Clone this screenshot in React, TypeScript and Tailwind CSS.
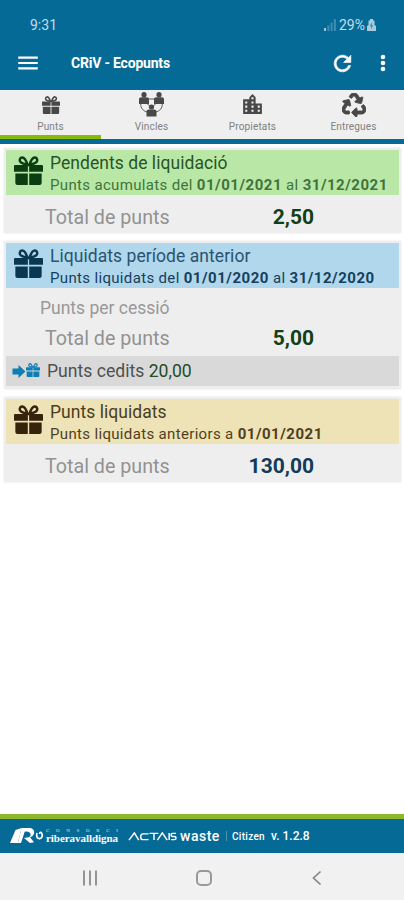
import React from 'react';
import clsx from 'clsx';
import { FaRecycle } from 'react-icons/fa';
import { MdLocationCity, MdMenu } from 'react-icons/md';

interface IconProps {
  className?: string;
}

const GiftIcon: React.FC<IconProps> = ({ className }) => (
  <svg viewBox="0 0 28 28" className={className} fill="currentColor">
    <path
      d="M13 8.300C11.600 4 10 1.200 7.800 1.400 5.400 1.600 4.800 4.800 6.800 6.300 8.300 7.400 10.500 7.800 13 8.300ZM15 8.300C16.400 4 18 1.200 20.200 1.400 22.600 1.600 23.200 4.800 21.200 6.300 19.700 7.400 17.500 7.800 15 8.300Z"
      fill="none"
      stroke="currentColor"
      strokeWidth="2.4"
    />
    <path d="M1 8.700h12.400v6.500H0V9.700a1 1 0 0 1 1-1ZM14.600 8.700H27a1 1 0 0 1 1 1v5.500H14.600Z" />
    <path d="M1.300 16.800h12V28H3.300a2 2 0 0 1-2-2ZM14.700 16.800h12V26a2 2 0 0 1-2 2h-10Z" />
  </svg>
);

const LinksIcon: React.FC<IconProps> = ({ className }) => (
  <svg viewBox="0 0 25 25" className={className} fill="currentColor">
    <path
      d="M9.500 7h6M1.700 12c0 4.200 2.400 7 6.500 8M23.300 12c0 4.200-2.400 7-6.500 8M8 11.500l3 2.800M17 11.500l-3 2.800"
      fill="none"
      stroke="currentColor"
      strokeWidth="0.9"
    />
    <circle cx="5" cy="2.700" r="2.600" />
    <path d="M0 12V7.600C0 6 .8 5.200 2.500 5.200h5C9.200 5.200 10 6 10 7.600V12Z" />
    <circle cx="20" cy="2.700" r="2.600" />
    <path d="M15 12V7.600c0-1.600.8-2.400 2.500-2.400h5c1.700 0 2.500.8 2.500 2.400V12Z" />
    <circle cx="12.500" cy="15" r="2.600" />
    <path d="M7.500 24.500v-4.600c0-1.600.8-2.400 2.500-2.400h5c1.700 0 2.500.8 2.500 2.400v4.600Z" />
  </svg>
);

const RefreshIcon: React.FC<IconProps> = ({ className }) => (
  <svg viewBox="0 0 24 24" className={className} fill="currentColor">
    <path
      d="M17.650 6.350C16.200 4.900 14.210 4 12 4c-4.420 0-7.990 3.580-7.990 8s3.570 8 7.990 8c3.730 0 6.840-2.550 7.730-6h-2.080c-.82 2.330-3.040 4-5.650 4-3.310 0-6-2.690-6-6s2.690-6 6-6c1.660 0 3.140.69 4.220 1.780L13 11h7V4l-2.350 2.350z"
      stroke="currentColor"
      strokeWidth="0.6"
    />
  </svg>
);

const MoreIcon: React.FC<IconProps> = ({ className }) => (
  <svg viewBox="0 0 24 24" className={className} fill="currentColor">
    <circle cx="12" cy="6" r="2.300" />
    <circle cx="12" cy="12" r="2.300" />
    <circle cx="12" cy="18" r="2.300" />
  </svg>
);

const tabs = [
  { label: 'Punts', icon: <GiftIcon className="h-[18px] w-[18px]" /> },
  { label: 'Vincles', icon: <LinksIcon className="h-[25px] w-[25px]" /> },
  { label: 'Propietats', icon: <MdLocationCity className="h-[25px] w-[25px]" /> },
  { label: 'Entregues', icon: <FaRecycle className="h-[24px] w-[24px] stroke-current stroke-[20]" /> },
];

const StatusBar: React.FC = () => (
  <div className="flex h-[50px] items-center justify-between pl-[30px] pr-[28px] text-[14px] text-[#c3dde9]">
    <span>9:31</span>
    <div className="flex items-center">
      <svg viewBox="0 0 12 12" className="mr-[3px] h-[12px] w-[12px]" fill="currentColor">
        <path d="M0 9h2v3H0z" opacity="0.8" />
        <path d="M3.300 6.500h2V12h-2zM6.600 3.500h2V12h-2zM9.900 0h2v12h-2z" opacity="0.3" />
      </svg>
      <span>29%</span>
      <svg viewBox="0 0 9 12" className="ml-[2px] h-[12px] w-[9px]" fill="currentColor">
        <path d="M3 0h3v1.500h1.500V6L9 7v5H0V7l1.500-1V1.500H3Z" opacity="0.85" />
        <path d="M4.900 3 2.800 7.300h1.500L3.900 10.500l2.300-4.300H4.700Z" fill="#066a97" opacity="0.7" />
      </svg>
    </div>
  </div>
);

interface PointsCardProps {
  title: string;
  subtitle: React.ReactNode;
  headClass: string;
  iconClass: string;
  titleClass: string;
  children: React.ReactNode;
}

const PointsCard: React.FC<PointsCardProps> = ({
  title,
  subtitle,
  headClass,
  iconClass,
  titleClass,
  children,
}) => (
  <section className="bg-[#eeeeee] px-[2px] pt-[2px] shadow-[0_0_2px_#e4e4e4]">
    <div className={clsx('flex h-[45px] pl-[8px] pt-[6px]', headClass)}>
      <GiftIcon className={clsx('h-[29px] w-[29px] shrink-0', iconClass)} />
      <div className="-mt-[4px] ml-[7px] whitespace-nowrap">
        <h2 className={clsx('h-[22px] text-[17.5px] leading-[22px] tracking-[0.05px]', titleClass)}>
          {title}
        </h2>
        <p className="h-[22px] text-[15px] leading-[22px] tracking-[0.34px]">{subtitle}</p>
      </div>
    </div>
    {children}
  </section>
);

const DateText: React.FC<{ value: string }> = ({ value }) => (
  <b className="tracking-[0.52px]">{value}</b>
);

interface TotalRowProps {
  value: string;
  className?: string;
}

const TotalRow: React.FC<TotalRowProps> = ({ value, className }) => (
  <div className="flex h-[38px] items-center justify-between pl-[39px] pr-[85px] pt-[7px]">
    <span className="text-[19.7px] text-[#929292]">Total de punts</span>
    <span className={clsx('text-[21px] font-bold', className)}>{value}</span>
  </div>
);

const FooterLogo: React.FC = () => (
  <div className="flex h-[20px] items-center text-white">
    <svg viewBox="0 0 34 18" className="h-[18px] w-[34px]" fill="currentColor">
      <path d="M5.500 3 11.500 1 8 16H0Z" />
      <path d="M11.500 1h7c4 0 6.500 2 5.500 5.500-.6 2-2 3.200-4 3.800l4 4.900-4 .8-6-5 3-.5c2.400-.3 4-1.500 3.600-3.300C20 5 17.700 4 14.700 4.800L11 16H8Z" />
      <path d="M27 6c-1.200 3.500.5 6 2.800 5.600C32.400 11.200 33 8 31.500 6c-.8-1-2-.6-1.800.8" fill="none" stroke="currentColor" strokeWidth="1.7" />
    </svg>
    <div className="ml-[2px] w-[74px] whitespace-nowrap font-['Liberation_Serif',serif]">
      <div className="flex h-[5px] justify-between pr-[2px] text-[5px] leading-[5px] opacity-80">
        {'CONSORCI'.split('').map((letter, i) => (
          <span key={i}>{letter}</span>
        ))}
      </div>
      <div className="h-[11px] text-[11px] font-bold leading-[11px] tracking-[-0.05px]">riberavalldigna</div>
    </div>
  </div>
);

const App: React.FC = () => {
  return (
    <div className="flex h-[900px] w-[404px] flex-col overflow-hidden bg-white font-[Roboto,sans-serif]">
      <header className="h-[90px] bg-[#066a97]">
        <StatusBar />
        <div className="flex h-[26px] items-center pl-[15px] text-white">
          <MdMenu className="h-[26px] w-[26px]" />
          <h1 className="ml-[30px] text-[14px] font-bold tracking-[-0.2px]">CRiV - Ecopunts</h1>
          <RefreshIcon className="ml-auto h-[25px] w-[25px]" />
          <MoreIcon className="ml-[16px] mr-[9px] h-[24px] w-[24px]" />
        </div>
      </header>

      <nav className="grid h-[49px] shrink-0 grid-cols-4 bg-[#efefef] text-[#484848]">
        {tabs.map((tab, i) => (
          <div
            key={tab.label}
            className={clsx(
              'mb-[1px] flex flex-col items-center border-b-[5px] pt-[2px]',
              i === 0 ? 'border-[#8ab90b]' : 'border-transparent'
            )}
          >
            <div className="flex h-[25px] shrink-0 items-center">{tab.icon}</div>
            <span className="mt-[2px] text-[10px] leading-[16px] tracking-[0.15px] text-[#808080]">
              {tab.label}
            </span>
          </div>
        ))}
      </nav>
      <div className="h-[5px] bg-[#066a97]" />

      <main className="flex flex-1 flex-col gap-[8px] pl-[4px] pr-[3px] pt-[4px]">
        <PointsCard
          title="Pendents de liquidació"
          headClass="bg-[#b9e8a6] text-[#3f743c]"
          iconClass="text-[#0b3d12]"
          titleClass="text-[#285526]"
          subtitle={
            <>
              Punts acumulats del <DateText value="01/01/2021" /> al <DateText value="31/12/2021" />
            </>
          }
        >
          <TotalRow value="2,50" className="text-[#123f16]" />
        </PointsCard>

        <PointsCard
          title="Liquidats període anterior"
          headClass="bg-[#b0d7ec] text-[#163f5c]"
          iconClass="text-[#0a3853]"
          titleClass="text-[#2b536e]"
          subtitle={
            <>
              Punts liquidats del <DateText value="01/01/2020" /> al <DateText value="31/12/2020" />
            </>
          }
        >
          <div className="flex h-[28px] items-center pl-[34px] pt-[13px] text-[17.5px] text-[#989898]">
            Punts per cessió
          </div>
          <TotalRow value="5,00" className="text-[#123f16]" />
          <div className="mb-[3px] mt-[2px] flex h-[30px] items-center bg-[#d9d9d9] pl-[6px] text-[17.6px] text-[#505050]">
            <svg viewBox="0 0 13 13" className="h-[13px] w-[14px] text-[#0d7fb5]" fill="currentColor">
              <path d="M0 3.500h6V0l7 6.500L6 13V9.500H0Z" />
            </svg>
            <GiftIcon className="mb-[2px] h-[14px] w-[14px] text-[#0d7fb5]" />
            <span className="ml-[7px]">
              Punts cedits <span className="text-[#254b28]">20,00</span>
            </span>
          </div>
        </PointsCard>

        <PointsCard
          title="Punts liquidats"
          headClass="bg-[#ede3b7] text-[#503f20]"
          iconClass="text-[#35230b]"
          titleClass="text-[#4b3d20]"
          subtitle={
            <>
              Punts liquidats anteriors a <DateText value="01/01/2021" />
            </>
          }
        >
          <TotalRow value="130,00" className="text-[#123b5a]" />
        </PointsCard>
      </main>

      <footer className="flex h-[39px] items-center border-t-[5px] border-[#8eb82e] bg-[#066a97] pl-[10px] text-white">
        <FooterLogo />
        <div className="ml-[8px] flex items-center whitespace-nowrap">
          <svg viewBox="0 0 50 10" preserveAspectRatio="none" className="h-[9px] w-[49px]" fill="none" stroke="currentColor" strokeWidth="1.500">
            <path d="M1 9 6.500 1 11 9M21 2h-5.500q-2.500 0-2.500 3v1q0 2.500 2.500 2.500H21M22 1.500h9M26.500 1.500V9M30 9 35 1 40 9M42 1v8M49 1.500h-3.500q-1.500 0-1.500 1.700T45.500 5h2Q49 5 49 6.700T47.500 8.500H44" />
          </svg>
          <span className="ml-[3px] w-[42px] text-[14px] font-medium tracking-[0.5px]">waste</span>
          <span className="ml-[4px] h-[10px] w-px bg-[#4c95b5]" />
          <span className="ml-[5px] w-[34px] text-[10px] font-medium tracking-[0.3px]">Citizen</span>
          <span className="ml-[5px] text-[12px] font-medium">v. 1.2.8</span>
        </div>
      </footer>

      <div className="flex h-[47px] items-center bg-[#f1f1f1] text-[#858585]">
        <svg viewBox="0 0 16 16" className="ml-[82px] mt-[3px] h-[16px] w-[16px]" stroke="currentColor" strokeWidth="1.700">
          <path d="M2 0.500v15M8 0.500v15M14 0.500v15" />
        </svg>
        <span className="ml-[98px] mt-[3px] h-[16px] w-[16px] rounded-[5px] border-2 border-[#999999]" />
        <svg viewBox="0 0 10 16" className="ml-[100px] mt-[3px] h-[16px] w-[10px]" fill="none" stroke="currentColor" strokeWidth="1.700">
          <path d="M8.500 1.500 1.500 8l7 6.500" />
        </svg>
      </div>
    </div>
  );
};

export default App;
